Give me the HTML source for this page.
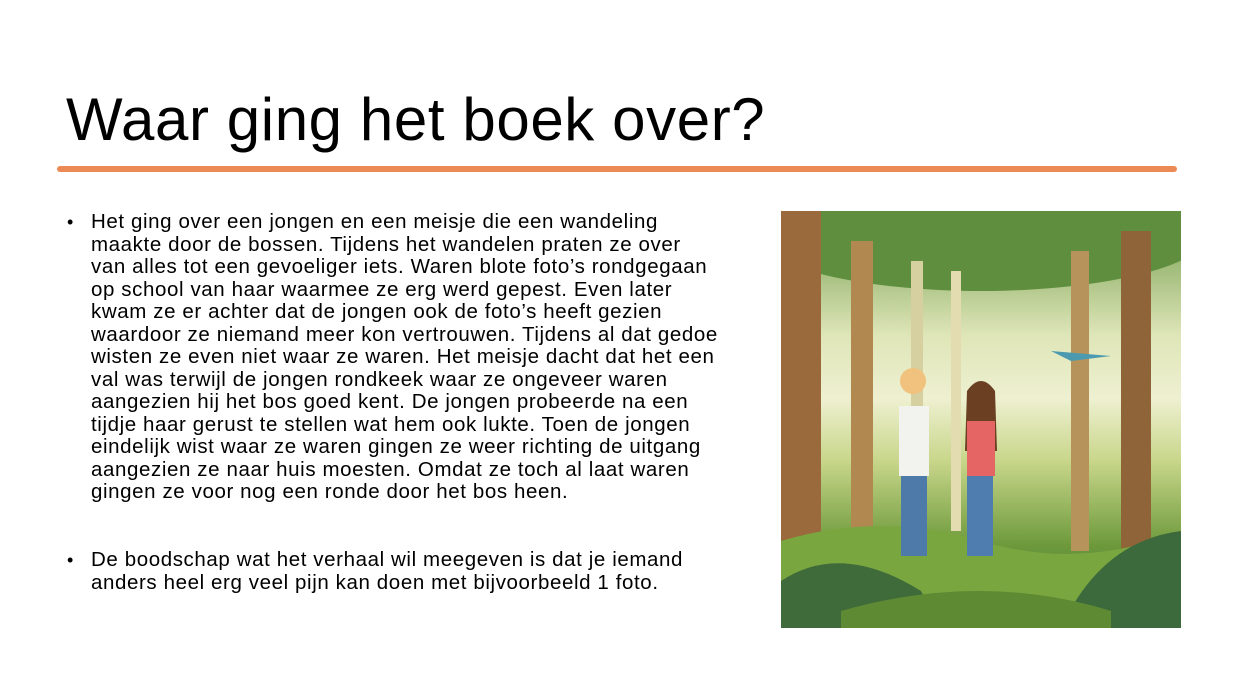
<!DOCTYPE html>
<html><head><meta charset="utf-8"><style>
html,body{margin:0;padding:0;background:#fff;}
body{width:1240px;height:691px;position:relative;overflow:hidden;font-family:"Liberation Sans",sans-serif;color:#000;}
h1{position:absolute;left:66px;top:80px;margin:0;font-weight:normal;font-size:60px;letter-spacing:0.6px;line-height:80px;}
.line{position:absolute;left:57px;top:166px;width:1120px;height:6px;background:#ec8a55;border-radius:3px;}
.txt{position:absolute;left:91px;white-space:nowrap;font-size:20.5px;line-height:22.5px;letter-spacing:0.6px;}
.b{position:absolute;left:67px;font-size:18px;}
.img{position:absolute;left:781px;top:211px;width:400px;height:417px;overflow:hidden;background:linear-gradient(180deg,#6f9a4a 0%,#dfe6b8 30%,#eef0d0 45%,#c8d68a 60%,#6e9a3c 80%,#36623a 100%);}
</style></head><body>
<h1>Waar ging het boek over?</h1>
<div class="line"></div>
<div class="b" style="top:212px">•</div>
<div class="txt" style="top:211px">Het ging over een jongen en een meisje die een wandeling<br>maakte door de bossen. Tijdens het wandelen praten ze over<br>van alles tot een gevoeliger iets. Waren blote foto’s rondgegaan<br>op school van haar waarmee ze erg werd gepest. Even later<br>kwam ze er achter dat de jongen ook de foto’s heeft gezien<br>waardoor ze niemand meer kon vertrouwen. Tijdens al dat gedoe<br>wisten ze even niet waar ze waren. Het meisje dacht dat het een<br>val was terwijl de jongen rondkeek waar ze ongeveer waren<br>aangezien hij het bos goed kent. De jongen probeerde na een<br>tijdje haar gerust te stellen wat hem ook lukte. Toen de jongen<br>eindelijk wist waar ze waren gingen ze weer richting de uitgang<br>aangezien ze naar huis moesten. Omdat ze toch al laat waren<br>gingen ze voor nog een ronde door het bos heen.</div>
<div class="b" style="top:550px">•</div>
<div class="txt" style="top:549px">De boodschap wat het verhaal wil meegeven is dat je iemand<br>anders heel erg veel pijn kan doen met bijvoorbeeld 1 foto.</div>
<div class="img">
<svg width="400" height="417" viewBox="0 0 400 417">
<ellipse cx="200" cy="20" rx="230" ry="60" fill="#5f8f3e"/>
<rect x="0" y="0" width="40" height="417" fill="#9a6a3c"/>
<rect x="70" y="30" width="22" height="330" fill="#b08850"/>
<rect x="130" y="50" width="12" height="280" fill="#d6cfa0"/>
<rect x="170" y="60" width="10" height="260" fill="#e2dcb0"/>
<rect x="290" y="40" width="18" height="300" fill="#b6935a"/>
<rect x="340" y="20" width="30" height="380" fill="#8f6438"/>
<path d="M0 330 Q100 300 200 330 T400 320 V417 H0Z" fill="#7aa640"/>
<path d="M0 370 Q60 330 140 380 L160 417 H0Z" fill="#3f6b3a"/>
<path d="M280 417 Q320 330 400 320 V417Z" fill="#3d6a3c"/>
<path d="M60 400 Q200 360 330 400 L330 417 H60Z" fill="#5f8a34"/>
<circle cx="132" cy="170" r="13" fill="#f1c27d"/>
<rect x="118" y="195" width="30" height="70" fill="#f2f2ee"/>
<rect x="120" y="265" width="26" height="80" fill="#4d7aa8"/>
<circle cx="200" cy="185" r="13" fill="#e8b47a"/>
<path d="M186 180 Q200 160 214 180 L216 240 L184 240Z" fill="#6b4022"/>
<rect x="186" y="210" width="28" height="55" fill="#e56565"/>
<rect x="186" y="265" width="26" height="80" fill="#4f7db0"/>
<path d="M270 140 L330 145 L290 150Z" fill="#4b9ab0"/>
</svg>
</div>
</body></html>
